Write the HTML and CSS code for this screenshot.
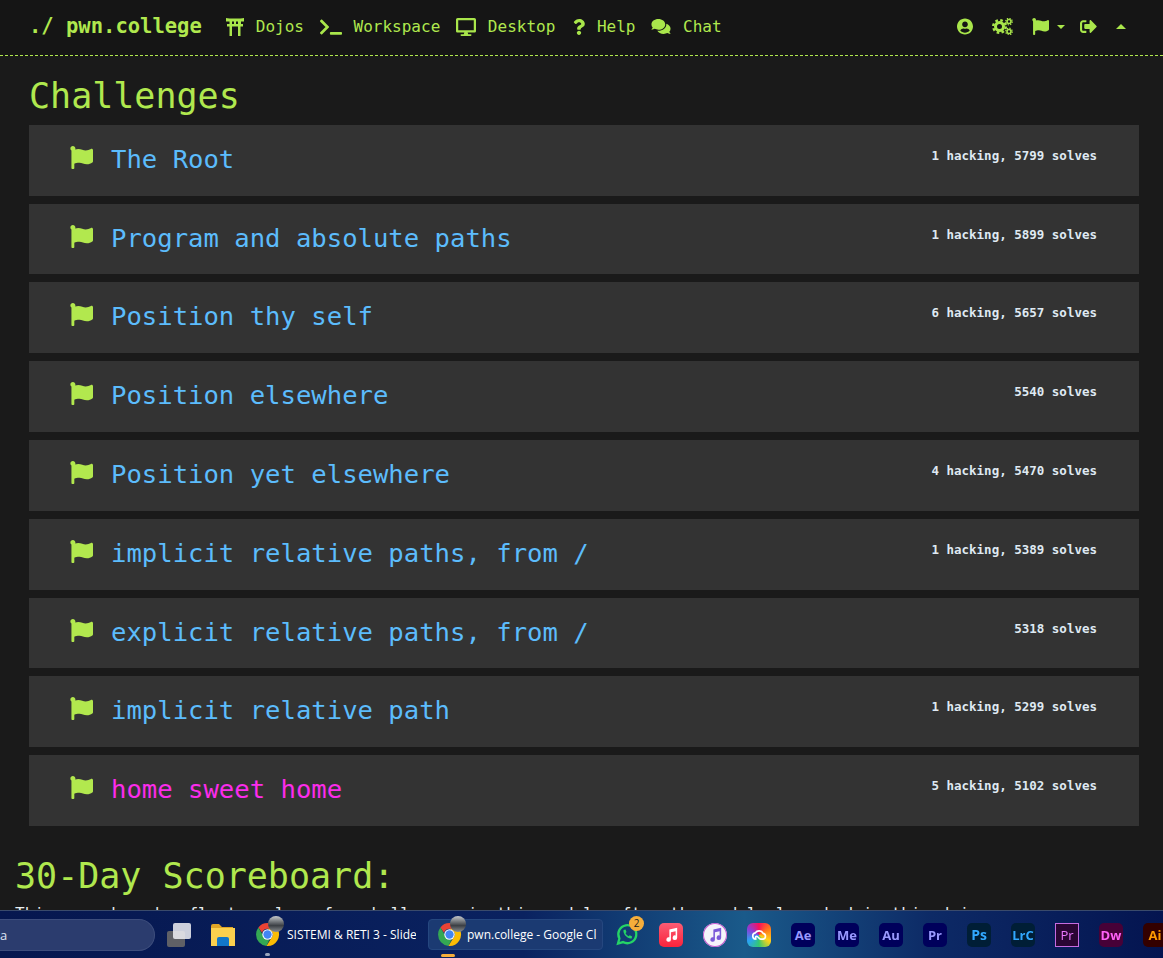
FILE: index.html
```html
<!DOCTYPE html>
<html lang="en">
<head>
    <meta charset="UTF-8">
    <meta name="viewport" content="width=device-width, initial-scale=1.0">
    <title>pwn.college</title>
    <link rel="stylesheet" href="styles.css">
</head>
<body>
    <svg class="defs" aria-hidden="true">
        <symbol id="flag" viewBox="0 0 512 512"><path d="M349.565 98.783C295.978 98.783 251.721 64 184.348 64c-24.955 0-47.309 4.384-68.045 12.013a55.947 55.947 0 0 0 3.586-23.562C118.117 24.015 94.806 1.206 66.338.048 34.345-1.254 8 24.296 8 56c0 19.026 9.497 35.825 24 45.945V488c0 13.255 10.745 24 24 24h16c13.255 0 24-10.745 24-24v-94.4c28.311-12.064 63.582-22.122 114.435-22.122 53.588 0 97.844 34.783 165.217 34.783 48.169 0 86.667-16.294 122.505-40.858C506.84 359.452 512 349.571 512 339.045v-243.1c0-23.393-24.269-38.87-45.485-29.016-34.338 15.948-76.454 31.854-116.95 31.854z"/></symbol>
        <symbol id="chrome" viewBox="0 0 48 48">
            <path fill="#ea4335" d="M24 2a22 22 0 0 1 19 11H24a11 11 0 0 0-10.500 7.500L6.500 10.500A22 22 0 0 1 24 2z"/>
            <path fill="#34a853" d="M2 24a22 22 0 0 1 4.500-13.500L16 27a10 10 0 0 0 12 6l-6 13A22 22 0 0 1 2 24z"/>
            <path fill="#fbbc04" d="M43 13a22 22 0 0 1-21 33l9-15a10 10 0 0 0 1-13l-8-5z"/>
            <circle cx="24" cy="24" r="10" fill="#fff"/>
            <circle cx="24" cy="24" r="8" fill="#4285f4"/>
        </symbol>
        <symbol id="note" viewBox="0 0 24 24"><path d="M9 5l11-2.500v14a3.200 3.200 0 1 1-2.200-3V7.300L11.200 8.800V19a3.200 3.200 0 1 1-2.200-3z"/></symbol>
    </svg>

    <header class="navbar">
        <a class="brand">./ pwn.college</a>
        <nav class="nav-left">
            <a class="nav-link">
                <svg class="icon icon-dojos" viewBox="0 0 18 18"><path d="M0 0c3 .8 15 .8 18 0v3.500H15V6h2v2.500h-2.500V18H12V8.500H6V18H3.500V8.500H1V6h2.500V3.500H0zM6 3.500V6h2V3.500zM10 3.500V6h2V3.500z"/></svg>
                Dojos
            </a>
            <a class="nav-link">
                <svg class="icon icon-terminal" viewBox="0 0 640 512"><path d="M257.981 272.971L63.638 467.314c-9.373 9.373-24.569 9.373-33.941 0L7.029 444.647c-9.357-9.357-9.375-24.522-.04-33.901L161.011 256 6.99 101.255c-9.335-9.379-9.317-24.544.04-33.901l22.667-22.667c9.373-9.373 24.569-9.373 33.941 0L257.981 239.03c9.373 9.372 9.373 24.568 0 33.941zM640 456v-32c0-13.255-10.745-24-24-24H312c-13.255 0-24 10.745-24 24v32c0 13.255 10.745 24 24 24h304c13.255 0 24-10.745 24-24z"/></svg>
                Workspace
            </a>
            <a class="nav-link">
                <svg class="icon icon-desktop" viewBox="0 0 576 512"><path d="M528 0H48C21.5 0 0 21.5 0 48v320c0 26.5 21.5 48 48 48h192l-16 48h-72c-13.3 0-24 10.7-24 24s10.7 24 24 24h272c13.3 0 24-10.7 24-24s-10.7-24-24-24h-72l-16-48h192c26.500 0 48-21.500 48-48V48c0-26.500-21.500-48-48-48zm-16 352H64V64h448v288z"/></svg>
                Desktop
            </a>
            <a class="nav-link">
                <svg class="icon icon-help" viewBox="0 0 384 512"><path d="M202.021 0C122.202 0 70.503 32.703 29.914 91.026c-7.363 10.58-5.093 25.086 5.178 32.874l43.138 32.709c10.373 7.865 25.132 6.026 33.253-4.148 25.049-31.381 43.63-49.449 82.757-49.449 30.764 0 68.816 19.799 68.816 49.631 0 22.552-18.617 34.134-48.993 51.164-35.423 19.86-82.299 44.576-82.299 106.405V320c0 13.255 10.745 24 24 24h72.471c13.255 0 24-10.745 24-24v-5.773c0-42.86 125.268-44.645 125.268-160.627C377.504 66.256 286.902 0 202.021 0zM192 373.459c-38.196 0-69.271 31.075-69.271 69.271 0 38.195 31.075 69.27 69.271 69.27s69.271-31.075 69.271-69.271-31.075-69.27-69.271-69.27z"/></svg>
                Help
            </a>
            <a class="nav-link">
                <svg class="icon icon-chat" viewBox="0 0 576 512"><path d="M416 192c0-88.4-93.1-160-208-160S0 103.6 0 192c0 34.3 14.1 65.9 38 92-13.4 30.2-35.5 54.2-35.8 54.5-2.2 2.3-2.8 5.7-1.5 8.7S4.8 352 8 352c36.6 0 66.9-12.3 88.7-25 32.2 15.7 70.3 25 111.3 25 114.9 0 208-71.6 208-160zm122 220c23.9-26 38-57.7 38-92 0-66.9-53.5-124.2-129.3-148.1.9 6.6 1.3 13.3 1.3 20.1 0 105.9-107.7 192-240 192-10.8 0-21.3-.8-31.7-1.9C207.8 439.6 281.8 480 368 480c41 0 79.1-9.2 111.3-25 21.8 12.7 52.1 25 88.7 25 3.2 0 6.1-1.9 7.3-4.800 1.300-2.900.7-6.300-1.500-8.700-.3-.3-22.400-24.200-35.800-54.500z"/></svg>
                Chat
            </a>
        </nav>
        <div class="nav-right">
            <svg class="icon icon-user" viewBox="0 0 496 512"><path d="M248 8C111 8 0 119 0 256s111 248 248 248 248-111 248-248S385 8 248 8zm0 96c48.6 0 88 39.4 88 88s-39.4 88-88 88-88-39.4-88-88 39.4-88 88-88zm0 344c-58.7 0-111.3-26.6-146.5-68.2 18.8-35.4 55.6-59.8 98.5-59.8 2.4 0 4.8.4 7.1 1.1 13 4.2 26.6 6.9 40.9 6.9 14.3 0 28-2.7 40.9-6.9 2.3-.7 4.7-1.1 7.1-1.1 42.9 0 79.700 24.400 98.500 59.800C359.300 421.400 306.700 448 248 448z"/></svg>
            <svg class="icon icon-cogs" viewBox="0 0 21 17">
                <g class="cog">
                    <circle cx="7.500" cy="8.500" r="4" stroke-width="3"/>
                    <circle cx="7.500" cy="8.500" r="6.300" stroke-width="2.400" stroke-dasharray="2.600 2.350"/>
                    <circle cx="17" cy="3.500" r="2" stroke-width="1.600"/>
                    <circle cx="17" cy="3.500" r="3.300" stroke-width="1.200" stroke-dasharray="1.300 1.290"/>
                    <circle cx="17" cy="13.500" r="2" stroke-width="1.600"/>
                    <circle cx="17" cy="13.500" r="3.300" stroke-width="1.200" stroke-dasharray="1.300 1.290"/>
                </g>
            </svg>
            <span class="nav-flag">
                <svg class="icon icon-nav-flag"><use href="#flag"/></svg>
                <span class="caret caret-down"></span>
            </span>
            <svg class="icon icon-signout" viewBox="0 0 512 512"><path d="M497 273L329 441c-15 15-41 4.500-41-17v-96H152c-13.300 0-24-10.700-24-24v-96c0-13.300 10.700-24 24-24h136V88c0-21.400 25.900-32 41-17l168 168c9.300 9.400 9.300 24.600 0 34zM192 436v-40c0-6.600-5.400-12-12-12H96c-17.700 0-32-14.300-32-32V160c0-17.700 14.300-32 32-32h84c6.600 0 12-5.400 12-12V76c0-6.600-5.400-12-12-12H96c-53 0-96 43-96 96v192c0 53 43 96 96 96h84c6.600 0 12-5.400 12-12z"/></svg>
            <span class="caret caret-up"></span>
        </div>
    </header>

    <main class="page">
        <h2 class="section-title">Challenges</h2>
        <div class="challenges">
            <div class="challenge">
                <svg class="row-flag"><use href="#flag"/></svg>
                <span class="challenge-name">The Root</span>
                <span class="challenge-stats">1 hacking, 5799 solves</span>
            </div>
            <div class="challenge">
                <svg class="row-flag"><use href="#flag"/></svg>
                <span class="challenge-name">Program and absolute paths</span>
                <span class="challenge-stats">1 hacking, 5899 solves</span>
            </div>
            <div class="challenge">
                <svg class="row-flag"><use href="#flag"/></svg>
                <span class="challenge-name">Position thy self</span>
                <span class="challenge-stats">6 hacking, 5657 solves</span>
            </div>
            <div class="challenge">
                <svg class="row-flag"><use href="#flag"/></svg>
                <span class="challenge-name">Position elsewhere</span>
                <span class="challenge-stats">5540 solves</span>
            </div>
            <div class="challenge">
                <svg class="row-flag"><use href="#flag"/></svg>
                <span class="challenge-name">Position yet elsewhere</span>
                <span class="challenge-stats">4 hacking, 5470 solves</span>
            </div>
            <div class="challenge">
                <svg class="row-flag"><use href="#flag"/></svg>
                <span class="challenge-name">implicit relative paths, from /</span>
                <span class="challenge-stats">1 hacking, 5389 solves</span>
            </div>
            <div class="challenge">
                <svg class="row-flag"><use href="#flag"/></svg>
                <span class="challenge-name">explicit relative paths, from /</span>
                <span class="challenge-stats">5318 solves</span>
            </div>
            <div class="challenge">
                <svg class="row-flag"><use href="#flag"/></svg>
                <span class="challenge-name">implicit relative path</span>
                <span class="challenge-stats">1 hacking, 5299 solves</span>
            </div>
            <div class="challenge">
                <svg class="row-flag"><use href="#flag"/></svg>
                <span class="challenge-name active">home sweet home</span>
                <span class="challenge-stats">5 hacking, 5102 solves</span>
            </div>
        </div>
        <h2 class="scoreboard-title">30-Day Scoreboard:</h2>
        <p class="scoreboard-text">This scoreboard reflects solves for challenges in this module after the module launched in this dojo.</p>
    </main>

    <footer class="taskbar">
        <div class="search">a</div>
        <div class="task-view"><span class="tv-back"></span><span class="tv-front"></span></div>
        <svg class="folder" viewBox="0 0 24 22">
            <path fill="#e0a526" d="M0 2a2 2 0 0 1 2-2h6l3 3h11v4H0z"/>
            <path fill="#fbd04e" d="M0 4h24v18H0z"/>
            <path fill="#1277c9" d="M6 15a2 2 0 0 1 2-2h8a2 2 0 0 1 2 2v7H6z"/>
        </svg>
        <div class="task-app">
            <span class="chrome-wrap">
                <svg class="chrome"><use href="#chrome"/></svg>
                <span class="profile"></span>
                <span class="app-dot"></span>
            </span>
            <span class="task-label task-label-first">SISTEMI &amp; RETI 3 - Slide</span>
        </div>
        <div class="task-app task-active">
            <span class="chrome-wrap">
                <svg class="chrome"><use href="#chrome"/></svg>
                <span class="profile"></span>
                <span class="app-bar"></span>
            </span>
            <span class="task-label">pwn.college - Google Cl</span>
        </div>
        <div class="tray">
            <span class="tray-icon whatsapp">
                <svg viewBox="0 0 24 24"><path fill="none" stroke="#25d366" stroke-width="2.300" d="M3 21l1.400-5A9 9 0 1 1 8 19.600z"/><path fill="#25d366" d="M8.500 7.500l2-.5 1 2.500-1 1.300c.7 1.300 1.700 2.200 3 2.900l1.300-1 2.400 1.200-.6 2c-3.900.7-8.700-4-8.100-8.400z"/></svg>
                <span class="badge">2</span>
            </span>
            <span class="tray-icon music"><svg class="note"><use href="#note"/></svg></span>
            <span class="tray-icon itunes"><svg class="note"><use href="#note"/></svg></span>
            <span class="tray-icon creative">
                <svg viewBox="0 0 24 24"><path fill="none" stroke="#fff" stroke-width="2" d="M8 17a3.800 3.800 0 0 1-.5-7.500A5.500 5.500 0 0 1 17 10a3.600 3.600 0 0 1 0 7h-3c-2-.2-3-3.500-5-3.500-1.500 0-1.500 3.500 0 3.500"/></svg>
            </span>
            <span class="tray-icon adobe ae">Ae</span>
            <span class="tray-icon adobe me">Me</span>
            <span class="tray-icon adobe au">Au</span>
            <span class="tray-icon adobe pr">Pr</span>
            <span class="tray-icon adobe ps">Ps</span>
            <span class="tray-icon adobe lrc">LrC</span>
            <span class="tray-icon adobe pre">Pr</span>
            <span class="tray-icon adobe dw">Dw</span>
            <span class="tray-icon adobe ai">Ai</span>
        </div>
    </footer>
</body>
</html>
```

FILE: styles.css
```css
/* General Styles */
html, body {
    height: 100%;
}

body {
    margin: 0;
    background: #1a1a1a;
    color: #b0e84e;
    font-family: 'DejaVu Sans Mono', monospace;
    overflow: hidden;
}

.defs {
    display: none;
}

.icon {
    display: block;
    fill: #a9e64b;
    flex: none;
}

/* Navbar */
.navbar {
    display: flex;
    align-items: center;
    box-sizing: border-box;
    height: 56px;
    padding: 0 37px 2px 29px;
    background: #151515;
    border-bottom: 1px dashed #b0e84e;
}

.brand {
    font-size: 20.500px;
    font-weight: bold;
    margin: 0 24px 2px 0;
}

.nav-left {
    display: flex;
    align-items: center;
    gap: 15.600px;
}

.nav-link {
    display: flex;
    align-items: center;
    gap: 12px;
    font-size: 16px;
}

.icon-dojos { width: 18px; height: 18px; }
.icon-terminal { width: 22px; height: 18px; }
.icon-desktop { width: 20px; height: 18px; }
.icon-help { width: 12px; height: 18px; margin-left: 2px; }
.icon-chat { width: 20px; height: 17px; }

.nav-right {
    display: flex;
    align-items: center;
    gap: 19px;
    margin-left: auto;
}

.icon-user { width: 16px; height: 17px; }
.icon-cogs { width: 21px; height: 17px; }
.icon-nav-flag { width: 17px; height: 17px; }
.icon-signout { width: 17px; height: 17px; margin-left: -4px; }

.cog circle {
    fill: none;
    stroke: #a9e64b;
}

.nav-flag {
    display: flex;
    align-items: center;
    gap: 8px;
}

.caret {
    width: 0;
    height: 0;
    border-left: 4px solid transparent;
    border-right: 4px solid transparent;
}

.caret-down {
    border-top: 4px solid #a9e64b;
}

.caret-up {
    border-left-width: 5.500px;
    border-right-width: 5.500px;
    border-bottom: 5px solid #a9e64b;
}

/* Challenges */
.page {
    height: 854px;
    padding-left: 15px;
    overflow: hidden;
}

.section-title {
    margin: 0 0 3px 14px;
    padding-top: 13.800px;
    font-size: 35px;
    font-weight: normal;
    line-height: 52px;
}

.challenges {
    display: flex;
    flex-direction: column;
    gap: 8px;
    width: 1110px;
    margin-left: 14px;
}

.challenge {
    display: flex;
    align-items: flex-start;
    height: 70.800px;
    box-sizing: border-box;
    padding: 21px 42px 0 41px;
    background: #333;
}

.row-flag {
    width: 23px;
    height: 23px;
    fill: #b2e84e;
    flex: none;
}

.challenge-name {
    margin-left: 18px;
    font-size: 25.600px;
    line-height: 26px;
    color: #5cbcfc;
}

.challenge-name.active {
    color: #fb2ceb;
}

.challenge-stats {
    margin: 1px 0 0 auto;
    font-size: 12.500px;
    font-weight: bold;
    line-height: 18px;
    color: #dfe9f2;
}

.scoreboard-title {
    margin: 27px 0 0;
    font-size: 35px;
    font-weight: normal;
    line-height: 46px;
}

.scoreboard-text {
    margin: 5px 0 0;
    font-size: 16px;
    color: #e8eef0;
    white-space: nowrap;
}

/* Windows taskbar */
.taskbar {
    position: fixed;
    left: 0;
    right: 0;
    bottom: 0;
    display: flex;
    align-items: center;
    height: 48px;
    border-top: 1px solid #3a4a6b;
    box-sizing: border-box;
    background: linear-gradient(90deg, #06174f 0%, #0a2260 45%, #1a5a8a 64%, #0d2a66 80%, #041450 100%);
    font-family: 'Open Sans', sans-serif;
    color: #fff;
}

.search {
    width: 167px;
    height: 32px;
    margin-left: -12px;
    padding-left: 12px;
    box-sizing: border-box;
    border-radius: 0 16px 16px 0;
    background: #2b3c6e;
    border: 1px solid #3d4d7c;
    border-left: none;
    font-size: 13px;
    line-height: 30px;
    color: #dde3f2;
    flex: none;
}

.task-view {
    position: relative;
    width: 24px;
    height: 24px;
    margin-left: 12px;
    flex: none;
}

.tv-back {
    position: absolute;
    left: 0;
    bottom: 0;
    width: 18px;
    height: 16px;
    background: #5f6066;
    border-radius: 2px;
}

.tv-front {
    position: absolute;
    right: 0;
    top: 0;
    width: 18px;
    height: 16px;
    background: rgba(240, 240, 244, 0.85);
    border-radius: 2px;
}

.folder {
    width: 24px;
    height: 22px;
    margin-left: 20px;
    flex: none;
}

.task-app {
    display: flex;
    align-items: center;
    gap: 6px;
    height: 31px;
    margin-left: 20px;
    flex: none;
}

.chrome-wrap {
    position: relative;
    width: 26px;
    height: 26px;
    flex: none;
}

.chrome {
    display: block;
    width: 25px;
    height: 25px;
}

.profile {
    position: absolute;
    left: 13px;
    top: -6px;
    width: 16px;
    height: 16px;
    border-radius: 50%;
    background: linear-gradient(#c6c9cc, #3b3f44 60%, #8a8d90);
}

.app-dot {
    position: absolute;
    left: 10px;
    bottom: -8px;
    width: 5px;
    height: 3px;
    border-radius: 2px;
    background: #9aa5bd;
}

.app-bar {
    position: absolute;
    left: 4px;
    bottom: -9px;
    width: 14px;
    height: 3px;
    border-radius: 2px;
    background: #f6ae3b;
}

.task-label {
    width: 130px;
    overflow: hidden;
    font-size: 12px;
    white-space: nowrap;
}

.task-label-first {
    width: 129px;
}

.task-active {
    margin-left: 12px;
    width: 175px;
    box-sizing: border-box;
    padding-left: 8px;
    gap: 4px;
    background: #1b3a72;
    border: 1px solid #25477f;
    border-radius: 4px;
}

.tray {
    display: flex;
    align-items: center;
    gap: 20px;
    margin-left: 12px;
}

.tray-icon {
    position: relative;
    display: flex;
    align-items: center;
    justify-content: center;
    width: 24px;
    height: 24px;
    border-radius: 5px;
    flex: none;
}

.whatsapp svg {
    width: 25px;
    height: 25px;
}

.creative svg {
    width: 20px;
    height: 20px;
}

.note {
    width: 17px;
    height: 17px;
    fill: #fff;
}

.badge {
    position: absolute;
    right: -5px;
    top: -7px;
    width: 15px;
    height: 15px;
    border-radius: 50%;
    background: #f6ae3b;
    color: #1c1c1c;
    font-size: 10px;
    line-height: 15px;
    text-align: center;
}

.music {
    background: linear-gradient(#fb5c74, #fa233b);
}

.itunes {
    border-radius: 50%;
    background: #f4f4fa;
    box-shadow: inset 0 0 0 1px #c45ad0;
}

.itunes .note {
    fill: #7a5ad8;
}

.creative {
    background: conic-gradient(#fa0f5a, #ff7a1a, #ffd21a, #35c96f, #2aa4f4, #8b3fd8, #fa0f5a);
    border-radius: 6px;
}

.adobe {
    font-size: 13px;
    font-weight: bold;
}

.ae, .me, .pr, .au { background: #00005b; color: #9999ff; }
.ps, .lrc { background: #001e36; color: #31a8ff; }
.ps { font-size: 14px; }
.pre { background: #2a0634; color: #ea77ff; border: 1px solid #c56be0; border-radius: 0; box-sizing: border-box; font-weight: normal; }
.dw { background: #470137; color: #ff61f6; }
.ai { background: #330000; color: #ff9a00; }
```
